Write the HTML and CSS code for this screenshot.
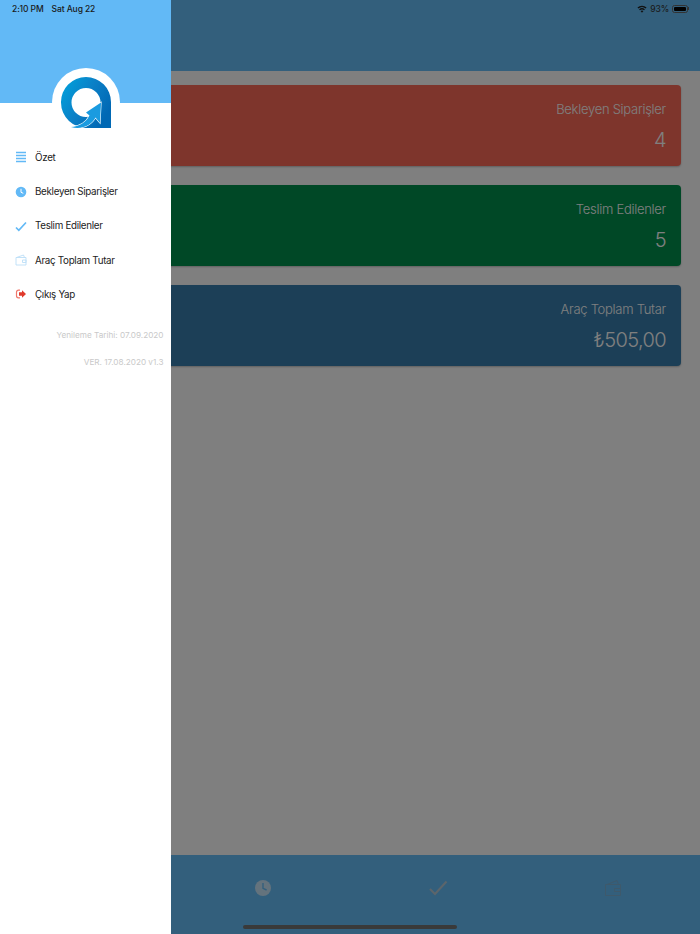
FILE: index.html
```html
<!DOCTYPE html>
<html lang="tr">
<head>
<meta charset="utf-8">
<title>Özet</title>
<link rel="stylesheet" href="styles.css">
</head>
<body>
<div class="app">
  <main class="main">
    <header class="topbar"></header>
    <section class="cards">
      <article class="card card-red"><h2 class="card-title">Bekleyen Siparişler</h2><p class="card-value">4</p></article>
      <article class="card card-green"><h2 class="card-title">Teslim Edilenler</h2><p class="card-value">5</p></article>
      <article class="card card-blue"><h2 class="card-title">Araç Toplam Tutar</h2><p class="card-value">₺505,00</p></article>
    </section>
    <nav class="tabs">
      <div class="tab"></div>
      <div class="tab">
        <svg class="tab-icon" viewBox="0 0 18 18"><circle cx="9" cy="9" r="8" fill="#c8e6fb"/><path d="M9 4v5.400l3.600 1.600" fill="none" stroke="#66bef9" stroke-width="1.400"/></svg>
      </div>
      <div class="tab">
        <svg class="tab-icon tab-icon-wide" viewBox="0 0 20 18"><path d="M2 10l5 5L18.500 2.500" fill="none" stroke="#b9cbd6" stroke-width="2"/></svg>
      </div>
      <div class="tab">
        <svg class="tab-icon" viewBox="0 0 18 18"><g fill="none" stroke="#7db2d6" stroke-width="1"><path d="M1.500 5.500h15v11h-15z"/><path d="M3 5.500L13 1.500l1.500 4"/><path d="M10.500 9.500h6v3h-6z"/></g></svg>
      </div>
    </nav>
  </main>
  <div class="scrim"></div>
  <aside class="drawer">
    <div class="drawer-head">
      <div class="logo-disc">
        <svg class="logo" viewBox="0 0 52 53">
          <defs>
            <linearGradient id="ring" x1="0" y1="0" x2="1" y2="0.6"><stop offset="0" stop-color="#00a5de"/><stop offset="0.55" stop-color="#0b7fc6"/><stop offset="1" stop-color="#0068b4"/></linearGradient>
          </defs>
          <path fill-rule="evenodd" fill="url(#ring)" d="M26 1a25 25 0 0 1 25 25v26H28A25.500 25.500 0 0 1 1 26.500 25 25 0 0 1 26 1zM26 12a14.500 14.500 0 1 0 0 29 14.500 14.500 0 0 0 0-29z"/>
          <path d="M11 51C19 50.500 26 46.500 29.500 39.500L26 36.500L41 26.500L40 47L35.500 41.500C31.500 49 22 54 11 51Z" fill="#1a9be0" stroke="#fff" stroke-width="1.200" paint-order="stroke"/>
        </svg>
      </div>
    </div>
    <ul class="menu">
      <li class="menu-item">
        <svg class="menu-icon" viewBox="0 0 12 12"><path d="M1 1.500h10M1 4.500h10M1 7.500h10M1 10.500h10" stroke="#62b9f6" stroke-width="1.700"/></svg>
        <span>Özet</span>
      </li>
      <li class="menu-item">
        <svg class="menu-icon" viewBox="0 0 12 12"><circle cx="6" cy="6" r="5.300" fill="#62b9f6"/><path d="M6 2.800v3.500l2.300 1" fill="none" stroke="#fff" stroke-width="1"/></svg>
        <span>Bekleyen Siparişler</span>
      </li>
      <li class="menu-item">
        <svg class="menu-icon" viewBox="0 0 12 12"><path d="M1 7.500l2.800 2.800L11 2.500" fill="none" stroke="#62b9f6" stroke-width="1.700"/></svg>
        <span>Teslim Edilenler</span>
      </li>
      <li class="menu-item">
        <svg class="menu-icon" viewBox="0 0 12 12"><g fill="none" stroke="#bcdff7" stroke-width="0.900"><path d="M1 3.500h10v7.500H1z"/><path d="M1.500 3.500L8.500 1l1 2.500"/><path d="M7.500 6h3.500v2.500H7.500z"/></g></svg>
        <span>Araç Toplam Tutar</span>
      </li>
      <li class="menu-item">
        <svg class="menu-icon" viewBox="0 0 12 12"><path d="M5 2.200H3.500A2 2 0 0 0 1.500 4.200v3.600a2 2 0 0 0 2 2H5" fill="none" stroke="#f0786c" stroke-width="1.200"/><path d="M4 4.300h3V2.300L11 6 7 9.700V7.700H4z" fill="#e03a2c"/></svg>
        <span>Çıkış Yap</span>
      </li>
    </ul>
    <p class="meta meta-first">Yenileme Tarihi: 07.09.2020</p>
    <p class="meta">VER. 17.08.2020 v1.3</p>
  </aside>
  <div class="status">
    <div class="status-left"><span>2:10 PM</span><span>Sat Aug 22</span></div>
    <div class="status-right">
      <svg class="wifi" viewBox="0 0 12 9"><path d="M6 9L4.300 6.900a2.700 2.700 0 0 1 3.400 0zM3.500 6L2.500 4.800a5.500 5.500 0 0 1 7 0L8.500 6a4 4 0 0 0-5 0zM1.700 3.900L.5 2.600a8.300 8.300 0 0 1 11 0l-1.200 1.300a6.600 6.600 0 0 0-8.600 0z" fill="#111"/></svg>
      <span>93%</span>
      <span class="battery"><span class="battery-fill"></span></span>
      <span class="battery-tip"></span>
    </div>
  </div>
  <div class="home-bar"></div>
</div>
</body>
</html>
```
FILE: styles.css
```css
* { box-sizing: border-box; }
html, body { margin: 0; padding: 0; }
body { font-family: Inter, "Noto Sans", "Liberation Sans", sans-serif; background: #fff; }
.app { position: relative; width: 700px; height: 934px; overflow: hidden; }
.main { display: flex; flex-direction: column; height: 100%; background: #fff; }
.topbar { height: 71px; background: #66bef9; }
.cards { flex: 1; display: flex; flex-direction: column; gap: 19px; padding: 14px 19px 0; }
.card { height: 81px; border-radius: 4px; padding: 15px 15px 0; text-align: right; color: #fff; box-shadow: 0 1px 2px rgba(0,0,0,.25); }
.card-red { background: #fd6b59; }
.card-green { background: #00914d; }
.card-blue { background: #387fae; }
.card-title { margin: 0; font-size: 13px; letter-spacing: -0.28px; line-height: 18px; font-weight: 300; }
.card-value { margin: 9px 0 0; font-size: 20px; letter-spacing: -0.6px; line-height: 26px; font-weight: 300; }
.tabs { height: 79px; background: #66bef9; display: grid; grid-template-columns: repeat(4, 1fr); }
.tab { display: flex; justify-content: center; padding-top: 24px; }
.tab-icon { width: 18px; height: 18px; }
.tab-icon-wide { width: 20px; height: 18px; }
.scrim { position: absolute; inset: 0; background: rgba(0,0,0,.5); }
.drawer { position: absolute; left: 0; top: 0; bottom: 0; width: 171px; background: #fff; }
.drawer-head { position: relative; height: 103px; background: #62b9f6; }
.logo-disc { position: absolute; left: 52px; top: 68px; width: 68px; height: 68px; border-radius: 50%; background: #fff; }
.logo { position: absolute; left: 8px; top: 8px; width: 52px; height: 53px; }
.menu { list-style: none; margin: 37.300px 0 0; padding: 0; }
.menu-item { display: flex; align-items: center; gap: 8px; height: 34.250px; padding-left: 15px; font-size: 9.800px; letter-spacing: -0.300px; color: #222; }
.menu-icon { width: 12px; height: 12px; flex: none; }
.meta { margin: 15px 0 0; padding-right: 7.500px; text-align: right; font-size: 8.200px; line-height: 12px; color: #c9c9c9; }
.meta-first { margin-top: 17.700px; }
.status { position: absolute; left: 0; right: 0; top: 0; height: 17px; display: flex; justify-content: space-between; align-items: center; padding: 0 11px 0 12px; font-size: 8.500px; font-weight: 500; letter-spacing: -0.1px; color: #1b1b1b; }
.status-left { display: flex; gap: 8px; }
.status-right { display: flex; align-items: center; gap: 3px; }
.wifi { width: 10px; height: 8px; }
.battery { width: 16px; height: 8px; border: 1px solid #333; border-radius: 2.500px; padding: 1px; display: flex; }
.battery-fill { flex: 1; background: #000; border-radius: 1px; }
.battery-tip { width: 1px; height: 3px; margin-left: -3px; background: #333; }
.home-bar { position: absolute; left: 243px; top: 925px; width: 214px; height: 3.500px; border-radius: 2px; background: #3a3a3a; }
```
